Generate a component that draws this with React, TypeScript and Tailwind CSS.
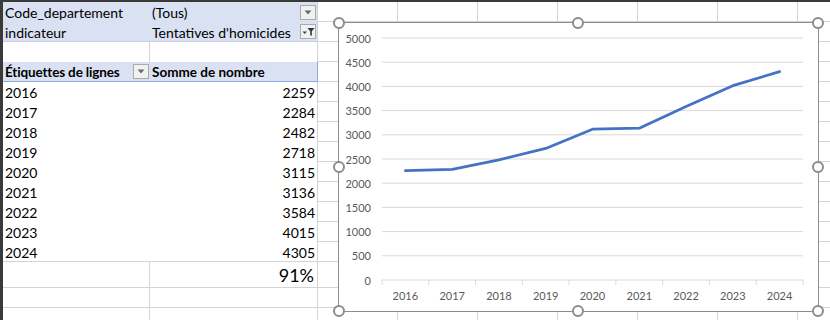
import React from 'react';

const years: [string, number][] = [
  ['2016', 2259],
  ['2017', 2284],
  ['2018', 2482],
  ['2019', 2718],
  ['2020', 3115],
  ['2021', 3136],
  ['2022', 3584],
  ['2023', 4015],
  ['2024', 4305],
];

// plot area, in page pixels
const X0 = 382;
const X1 = 803;
const Y0 = 280;
const YTOP = 38;
const step = (X1 - X0) / years.length;
const yOf = (v: number) => Y0 - (v / 5000) * (Y0 - YTOP);

const DropButton = ({ filter = false }: { filter?: boolean }) => (
  <span className="flex h-[15px] w-[16px] shrink-0 items-center justify-center border border-[#ababab] bg-[#f1f1f1]">
    {filter ? (
      <svg width="13" height="10" viewBox="0 0 13 10">
        <path d="M0.5 4.5 L5 4.5 L2.75 7 Z" fill="#444" />
        <path d="M5.5 1 L12.5 1 L9.8 4.2 L9.8 9 L8.2 8 L8.2 4.2 Z" fill="#333" />
      </svg>
    ) : (
      <svg width="8" height="5" viewBox="0 0 8 5">
        <path d="M0.5 0.5 H7.5 L4 4.5 Z" fill="#6b6b6b" />
      </svg>
    )}
  </span>
);

const SheetCells = () => (
  <>
    {Array.from({ length: 7 }).map((_, i) => (
      <div key={i} className="h-full w-[80px] shrink-0 border-r border-b border-[#d4d4d4]" />
    ))}
  </>
);

const Chart = () => (
  <svg
    className="absolute left-0 top-0"
    width="479"
    height="288"
    viewBox="339 23 479 288"
    style={{ fontFamily: 'Lato, "Liberation Sans", sans-serif' }}
  >
    {Array.from({ length: 11 }).map((_, k) => {
      const y = Y0 - k * ((Y0 - YTOP) / 10);
      return (
        <g key={k}>
          <line x1={X0} x2={X1} y1={y} y2={y} stroke="#d9d9d9" strokeWidth="1" />
          <text x={371} y={y} fontSize="11" fill="#595959" textAnchor="end" dominantBaseline="central">
            {k * 500}
          </text>
        </g>
      );
    })}
    {Array.from({ length: 10 }).map((_, i) => (
      <line key={i} x1={X0 + i * step} x2={X0 + i * step} y1={Y0} y2={Y0 + 5} stroke="#d9d9d9" />
    ))}
    {years.map(([label], i) => (
      <text
        key={label}
        x={X0 + step / 2 + i * step}
        y={295}
        fontSize="11"
        fill="#595959"
        textAnchor="middle"
        dominantBaseline="central"
      >
        {label}
      </text>
    ))}
    <polyline
      points={years.map(([, v], i) => `${X0 + step / 2 + i * step},${yOf(v)}`).join(' ')}
      fill="none"
      stroke="#4472c4"
      strokeWidth="2.75"
      strokeLinecap="round"
      strokeLinejoin="round"
    />
  </svg>
);

const Handle = ({ className }: { className: string }) => (
  <div className={`absolute h-[12px] w-[12px] rounded-full border-2 border-[#8c8c8c] bg-white ${className}`} />
);

export default function App() {
  return (
    <div
      className="relative h-[320px] w-[830px] overflow-hidden bg-white text-[14px] text-black"
      style={{ fontFamily: 'Lato, "Liberation Sans", sans-serif' }}
    >
      <div className="h-[2px] bg-[#3a3a3a]" />
      <div className="flex">
        <div className="w-[3px] shrink-0 bg-[#3a3a3a]" />
        <div className="flex flex-col">
          {/* report filters */}
          <div className="flex h-[20px]">
            <div className="flex h-full w-[147px] shrink-0 items-center bg-[#d9e1f2] pl-[2px] pt-[1px]">Code_departement</div>
            <div className="flex h-full w-[168px] shrink-0 items-center justify-between border-r border-[#d4d4d4] bg-[#d9e1f2] pl-[2px] pr-[1px]">
              <span className="pt-[1px]">(Tous)</span>
              <DropButton />
            </div>
            <SheetCells />
          </div>
          <div className="flex h-[20px]">
            <div className="flex h-full w-[147px] shrink-0 items-center border-b border-[#c9cfdc] bg-[#d9e1f2] pl-[2px] pt-[1px]">indicateur</div>
            <div className="flex h-full w-[168px] shrink-0 items-center justify-between border-r border-b border-[#c9cfdc] bg-[#d9e1f2] pl-[2px] pr-[1px]">
              <span className="pt-[1px]">Tentatives d'homicides</span>
              <DropButton filter />
            </div>
            <SheetCells />
          </div>
          <div className="flex h-[20px]">
            <div className="h-full w-[147px] shrink-0 border-r border-[#d4d4d4]" />
            <div className="h-full w-[168px] shrink-0 border-r border-[#d4d4d4]" />
            <SheetCells />
          </div>
          {/* header row */}
          <div className="flex h-[20px] text-[13.5px] font-bold">
            <div className="flex h-full w-[147px] shrink-0 items-center justify-between border-b border-[#8ea9db] bg-[#d9e1f2] pl-[2px] pr-[1px]">
              <span className="pt-[1px] tracking-[-0.15px]">Étiquettes de lignes</span>
              <DropButton />
            </div>
            <div className="flex h-full w-[168px] shrink-0 items-center border-r border-b border-[#8ea9db] bg-[#d9e1f2] pl-[2px] pt-[1px]">
              Somme de nombre
            </div>
            <SheetCells />
          </div>
          {years.map(([label, v], i) => (
            <div key={label} className="flex h-[20px]">
              <div
                className={`flex h-full w-[147px] shrink-0 items-center pl-[2px] pt-[1px] ${
                  i === years.length - 1 ? 'border-b border-[#d4d4d4]' : ''
                }`}
              >
                {label}
              </div>
              <div
                className={`flex h-full w-[168px] shrink-0 items-center justify-end border-r border-[#d4d4d4] pr-[2px] pt-[1px] ${
                  i === years.length - 1 ? 'border-b' : ''
                }`}
              >
                {v}
              </div>
              <SheetCells />
            </div>
          ))}
          <div className="flex h-[26px]">
            <div className="h-full w-[147px] shrink-0 border-r border-b border-[#d4d4d4]" />
            <div className="flex h-full w-[168px] shrink-0 items-center justify-end border-r border-b border-[#d4d4d4] pr-[3px] pt-[1px] text-[18px]">
              91%
            </div>
            <SheetCells />
          </div>
          {[0, 1].map((r) => (
            <div key={r} className="flex h-[20px]">
              <div className="h-full w-[147px] shrink-0 border-r border-b border-[#d4d4d4]" />
              <div className="h-full w-[168px] shrink-0 border-r border-b border-[#d4d4d4]" />
              <SheetCells />
            </div>
          ))}
        </div>
      </div>

      {/* floating chart object */}
      <div className="absolute left-[338px] top-[22px] h-[290px] w-[481px] border border-[#8c8c8c] bg-white">
        <Chart />
      </div>
      <Handle className="left-[333px] top-[17px]" />
      <Handle className="left-[572px] top-[17px]" />
      <Handle className="left-[812px] top-[17px]" />
      <Handle className="left-[333px] top-[161px]" />
      <Handle className="left-[812px] top-[161px]" />
      <Handle className="left-[333px] top-[305px]" />
      <Handle className="left-[572px] top-[305px]" />
      <Handle className="left-[812px] top-[305px]" />
    </div>
  );
}
